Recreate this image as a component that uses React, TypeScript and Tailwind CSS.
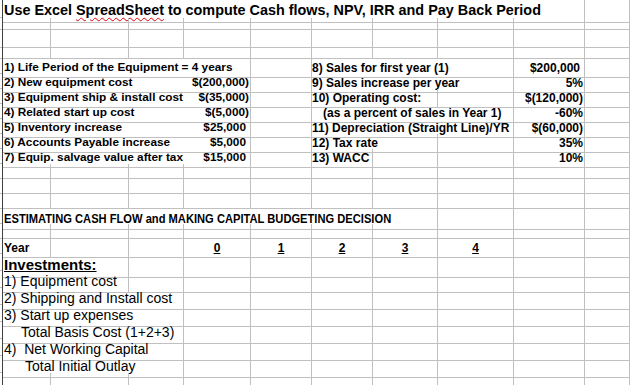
import type { ReactNode } from "react";

// Excel-style sheet: fixed column widths, each row is its own grid
const COLS = "grid grid-cols-[48px_78px_55px_67px_61px_61px_65px_76px_71px_1fr]";

const SPAN: Record<number, string> = {
  1: "col-span-1",
  2: "col-span-2",
  3: "col-span-3",
  4: "col-span-4",
  7: "col-span-7",
  9: "col-span-9",
};

type Cell = { span?: number; content?: ReactNode; cls?: string };

function Row({ h, cells }: { h: string; cells: Cell[] }) {
  return (
    <div className={`flex ${h}`}>
      <div className="w-[2px] shrink-0 border-b border-[#c0c0c0]" />
      <div className="w-[1px] shrink-0 bg-[#404040]" />
      <div className={`${COLS} flex-1`}>
        {cells.map((c, i) => (
          <div
            key={i}
            className={`${SPAN[c.span ?? 1]} flex items-center whitespace-nowrap border-b border-r border-[#c0c0c0] ${c.cls ?? ""}`}
          >
            {c.content}
          </div>
        ))}
      </div>
    </div>
  );
}

const empty = (n: number): Cell[] => Array.from({ length: n }, () => ({}));

const leftBlock: [string, string, boolean][] = [
  ["1) Life Period of the Equipment = 4 years", "", false],
  ["2) New equipment cost", "$(200,000)", false],
  ["3) Equipment ship & install cost", "$(35,000)", false],
  ["4) Related start up cost", "$(5,000)", false],
  ["5) Inventory increase", "$25,000", true],
  ["6) Accounts Payable increase", "$5,000", true],
  ["7) Equip. salvage value after tax", "$15,000", true],
];

// label, value, spans for the label part, pad value
const rightBlock: { label: string; value: string; spans: number[]; pos?: boolean; indent?: boolean }[] = [
  { label: "8) Sales for first year (1)", value: "$200,000", spans: [3], pos: true },
  { label: "9) Sales increase per year", value: "5%", spans: [3] },
  { label: "10) Operating cost:", value: "$(120,000)", spans: [2, 1] },
  { label: "(as a percent of sales in Year 1)", value: "-60%", spans: [3], indent: true },
  { label: "11) Depreciation (Straight Line)/YR", value: "$(60,000)", spans: [3] },
  { label: "12) Tax rate", value: "35%", spans: [2, 1] },
  { label: "13) WACC", value: "10%", spans: [1, 1, 1] },
];

const items: { text: string; span: number; cls?: string }[] = [
  { text: "1) Equipment cost", span: 2 },
  { text: "2) Shipping and Install cost", span: 3 },
  { text: "3) Start up expenses", span: 3 },
  { text: "Total Basis Cost (1+2+3)", span: 3, cls: "pl-[18px]" },
  { text: "4)\u00a0\u00a0Net Working Capital", span: 3 },
  { text: "Total Initial Outlay", span: 3, cls: "pl-[22px]" },
];

export default function App() {
  return (
    <div className="w-[630px] h-[385px] overflow-hidden bg-white text-black font-['Liberation_Sans',Arial,sans-serif]">
      <Row
        h="h-[18px]"
        cells={[
          {
            span: 9,
            cls: "pl-[1px] text-[14.4px] font-bold",
            content: (
              <span>
                Use Excel{" "}
                <span className="underline decoration-wavy decoration-red-600 decoration-1 underline-offset-2">
                  SpreadSheet
                </span>{" "}
                to compute Cash flows, NPV, IRR and Pay Back Period
              </span>
            ),
          },
          {},
        ]}
      />
      <Row h="h-[12px]" cells={empty(10)} />
      <Row h="h-[18px]" cells={empty(10)} />
      <Row h="h-[11px]" cells={empty(10)} />

      {leftBlock.map(([label, value, pos], i) => {
        const r = rightBlock[i];
        return (
          <Row
            key={label}
            h="h-[15px]"
            cells={[
              {
                span: 4,
                cls: "text-[11.8px] font-bold justify-between pl-[1px]",
                content: (
                  <>
                    <span>{label}</span>
                    <span className={pos ? "pr-[4px]" : "pr-[1px]"}>{value}</span>
                  </>
                ),
              },
              {},
              ...r.spans.map((s, j) => ({
                span: s,
                cls: `text-[12px] font-bold ${r.indent ? "pl-[11px]" : ""}`,
                content: j === 0 ? r.label : undefined,
              })),
              {
                cls: "text-[12px] font-bold justify-end",
                content: <span className={r.pos ? "pr-[4px]" : "pr-[1px]"}>{r.value}</span>,
              },
              {},
            ]}
          />
        );
      })}

      <Row h="h-[15px]" cells={empty(10)} />
      <Row h="h-[15px]" cells={empty(10)} />
      <Row h="h-[15px]" cells={empty(10)} />
      <Row
        h="h-[15px]"
        cells={[
          {
            span: 7,
            cls: "pl-[1px] text-[13.5px] font-bold",
            content: (
              <span className="inline-block origin-left scale-x-[0.826]">
                ESTIMATING CASH FLOW and MAKING CAPITAL BUDGETING DECISION
              </span>
            ),
          },
          {},
          {},
          {},
        ]}
      />
      <Row h="h-[15px]" cells={empty(10)} />
      <Row
        h="h-[15px]"
        cells={[
          { cls: "pl-[1px] text-[12px] font-bold", content: "Year" },
          {},
          {},
          ...["0", "1", "2", "3", "4"].map((n) => ({
            cls: "justify-center text-[12px] font-bold underline",
            content: n,
          })),
          {},
          {},
        ]}
      />
      <Row
        h="h-[17px]"
        cells={[
          { span: 2, cls: "pl-[1px] text-[15px] font-bold underline", content: "Investments:" },
          ...empty(8),
        ]}
      />
      {items.map((it) => (
        <Row
          key={it.text}
          h="h-[17px]"
          cells={[
            { span: it.span, cls: `pl-[1px] text-[14px] ${it.cls ?? ""}`, content: it.text },
            ...empty(10 - it.span),
          ]}
        />
      ))}
      <Row h="h-[17px]" cells={empty(10)} />
    </div>
  );
}
